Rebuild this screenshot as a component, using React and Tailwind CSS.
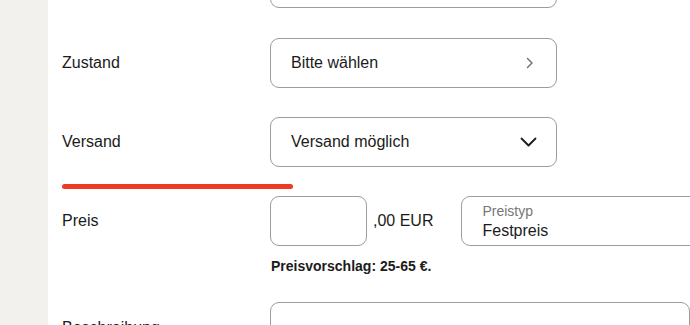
export default function App() {
  const box = "h-[50px] shrink-0 rounded-[9px] border border-[#9c9c9a] bg-white";
  return (
    <div
      className="flex h-[325px] w-[690px] overflow-hidden bg-white text-[#1b1b1b]"
      style={{ fontFamily: '"Liberation Sans", Arial, sans-serif' }}
    >
      <div className="w-[48px] shrink-0 bg-[#f2f1ee]" />
      <div className="flex min-w-0 flex-1 flex-col pl-[14px] [&>*]:shrink-0">
        {/* previous field, cut off */}
        <div className="mt-[-42px] flex">
          <div className="w-[208px] shrink-0" />
          <div className={`${box} w-[287px]`} />
        </div>

        <div className="mt-[30px] flex items-center">
          <div className="w-[208px] shrink-0 text-[16px]">Zustand</div>
          <div className={`${box} flex w-[287px] items-center justify-between pl-[20px] pr-[22px] text-[16px]`}>
            <span>Bitte wählen</span>
            <svg width="8" height="12" viewBox="0 0 8 12" fill="none">
              <path d="M1.5 1.5 L6 6 L1.5 10.5" stroke="#6b6b6b" strokeWidth="1.4" strokeLinecap="round" strokeLinejoin="round" />
            </svg>
          </div>
        </div>

        <div className="mt-[29px] flex items-center">
          <div className="w-[208px] shrink-0 text-[16px]">Versand</div>
          <div className={`${box} flex w-[287px] items-center justify-between pl-[20px] pr-[19px] text-[16px]`}>
            <span>Versand möglich</span>
            <svg width="17" height="10" viewBox="0 0 17 10" fill="none">
              <path d="M1.5 1.5 L8.5 8.5 L15.5 1.5" stroke="#1b1b1b" strokeWidth="1.8" strokeLinecap="round" strokeLinejoin="round" />
            </svg>
          </div>
        </div>

        <div className="mt-[17px] h-[5px] w-[231px] rounded-full bg-[#ee3a24]" />

        <div className="mt-[7px] flex items-center">
          <div className="w-[208px] shrink-0 text-[16px]">Preis</div>
          <div className={`${box} w-[97px]`} />
          <span className="ml-[6px] shrink-0 whitespace-nowrap text-[16px]">,00 EUR</span>
          <div className={`${box} ml-[28px] flex w-[260px] flex-col pl-[20px] pt-[6px]`}>
            <span className="text-[14px] leading-[16px] text-[#767676]">Preistyp</span>
            <span className="mt-[2px] text-[16px] leading-[20px]">Festpreis</span>
          </div>
        </div>

        <div className="mt-[10px] flex">
          <div className="w-[209px] shrink-0" />
          <span className="text-[14px] font-bold leading-[20px]">Preisvorschlag: 25-65 €.</span>
        </div>

        <div className="mt-[26px] flex items-start">
          <div className="mt-[14px] w-[208px] shrink-0 text-[16px]">Beschreibung</div>
          <div className="h-[120px] w-[420px] shrink-0 rounded-[9px] border border-[#9c9c9a]" />
        </div>
      </div>
    </div>
  );
}
